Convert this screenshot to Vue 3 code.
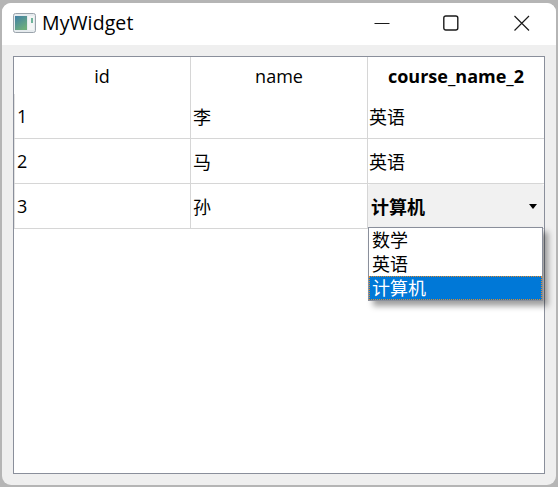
<template>
  <div class="desktop">
    <div class="window">
      <!-- 标题栏 -->
      <div class="titlebar">
        <svg class="app-icon" width="23" height="20" viewBox="0 0 23 20">
          <defs>
            <linearGradient id="pane" x1="0" y1="0" x2="0.6" y2="1">
              <stop offset="0" stop-color="#3f7fa6" />
              <stop offset="1" stop-color="#6fae7c" />
            </linearGradient>
          </defs>
          <rect x="0.5" y="0.5" width="22" height="19" rx="2" fill="#e6ebee" stroke="#9aa3ab" />
          <rect x="2" y="3" width="12" height="14" fill="url(#pane)" />
          <rect x="15" y="3" width="6" height="14" fill="#f3f5f5" />
          <rect x="18" y="5" width="2" height="5" fill="#6fb39a" />
        </svg>
        <span class="title">MyWidget</span>
        <div class="win-buttons">
          <svg class="win-btn" width="16" height="16" viewBox="0 0 16 16">
            <path d="M0.5 8.5H15.5" stroke="#1a1a1a" stroke-width="1.1" fill="none" />
          </svg>
          <svg class="win-btn" width="16" height="16" viewBox="0 0 16 16">
            <rect x="0.8" y="1" width="14" height="14" rx="2" stroke="#1a1a1a" stroke-width="1.4" fill="none" />
          </svg>
          <svg class="win-btn" width="16" height="16" viewBox="0 0 16 16">
            <path d="M0.5 1L15 15.5M15 1L0.5 15.5" stroke="#1a1a1a" stroke-width="1.2" fill="none" />
          </svg>
        </div>
      </div>

      <!-- 表格 -->
      <div class="content">
        <div class="table">
          <div class="row header">
            <div class="cell">id</div>
            <div class="cell">name</div>
            <div class="cell bold">course_name_2</div>
          </div>
          <div class="row" v-for="row in rows" :key="row.id">
            <div class="cell">{{ row.id }}</div>
            <div class="cell name">{{ row.name }}</div>
            <div class="cell course" v-if="!row.editing">{{ row.course }}</div>
            <div class="cell combo" v-else>
              <span>{{ row.course }}</span>
              <span class="arrow"></span>
              <div class="popup">
                <div
                  v-for="opt in options"
                  :key="opt"
                  :class="['option', { selected: opt === row.course }]"
                >{{ opt }}</div>
              </div>
            </div>
          </div>
        </div>
      </div>
    </div>
  </div>
</template>

<script setup>
const options = ['数学', '英语', '计算机']

const rows = [
  { id: 1, name: '李', course: '英语' },
  { id: 2, name: '马', course: '英语' },
  { id: 3, name: '孙', course: '计算机', editing: true }
]
</script>

<style>
html,
body {
  margin: 0;
  background: #a9a9a9;
}
</style>

<style scoped>
.desktop {
  width: 558px;
  height: 487px;
  box-sizing: border-box;
  padding: 3px 2px 2px 2px;
  background: #b5b5b5;
  overflow: hidden;
  font-family: "Open Sans", "Noto Sans CJK SC", sans-serif;
  color: #000;
}

.window {
  height: 100%;
  display: flex;
  flex-direction: column;
  background: #efefef;
  border-radius: 9px;
  overflow: hidden;
}

.titlebar {
  height: 42px;
  box-sizing: border-box;
  flex-shrink: 0;
  display: flex;
  align-items: center;
  background: #fff;
  padding-left: 11px;
  padding-bottom: 3px;
}

.app-icon {
  flex-shrink: 0;
  margin-right: 6px;
}

.title {
  font-size: 19.5px;
  letter-spacing: 0.1px;
}

.win-buttons {
  margin-left: auto;
  display: flex;
  gap: 55px;
  padding-right: 26px;
}

.win-btn {
  display: block;
}

.win-btn:first-child {
  margin-right: -2px;
}

.content {
  flex: 1;
  min-height: 0;
  padding: 11px;
  display: flex;
}

.table {
  flex: 1;
  background: #fff;
  border: 1px solid #8a8f9b;
}

.row {
  display: grid;
  grid-template-columns: 177px 177px 176px;
  height: 45px;
  box-sizing: border-box;
  border-bottom: 1px solid #d6d6d6;
  box-shadow: inset 1px 0 0 #e2e2e2;
}

.row.header {
  height: 37px;
  border-bottom: none;
  box-shadow: none;
}

.cell {
  display: flex;
  align-items: center;
  padding-left: 3px;
  font-size: 18px;
  border-right: 1px solid #d6d6d6;
}

.cell:last-child {
  border-right: none;
}

.cell.name {
  padding-left: 2px;
}

.cell.course {
  padding-left: 1px;
}

.header .cell {
  justify-content: center;
  padding-left: 0;
}

.bold {
  font-weight: 700;
}

.combo {
  position: relative;
  justify-content: space-between;
  background: #f1f1f1;
  border-radius: 3px;
  font-weight: 700;
  font-size: 18px;
}

.arrow {
  width: 0;
  height: 0;
  margin-right: 7px;
  border-left: 4px solid transparent;
  border-right: 4px solid transparent;
  border-top: 5px solid #000;
}

/* 下拉列表 */
.popup {
  position: absolute;
  left: 0;
  top: 43px;
  width: 175px;
  box-sizing: border-box;
  background: #fff;
  border: 1px solid #8a8f9b;
  box-shadow: 5px 5px 6px rgba(0, 0, 0, 0.38);
  font-weight: 400;
  font-size: 18px;
  z-index: 2;
}

.option {
  height: 24px;
  line-height: 24px;
  padding-left: 3px;
  box-sizing: border-box;
}

.option.selected {
  background: #0078d7;
  color: #fff;
  outline: 1px dotted #e08a2c;
  outline-offset: -1px;
}
</style>
